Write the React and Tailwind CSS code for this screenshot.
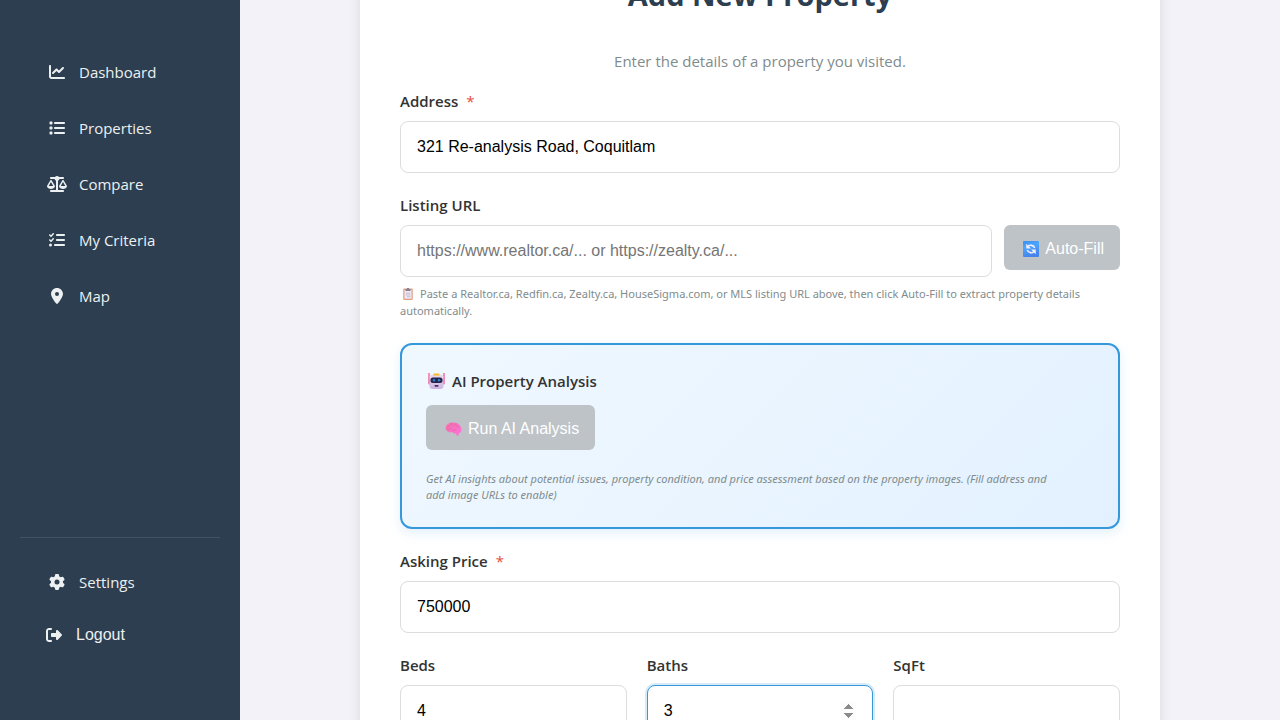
import React from "react";
import {
  FaChartLine,
  FaList,
  FaScaleBalanced,
  FaListCheck,
  FaLocationDot,
  FaGear,
  FaRightFromBracket,
} from "react-icons/fa6";

const NAV = [
  { label: "Dashboard", Icon: FaChartLine },
  { label: "Properties", Icon: FaList },
  { label: "Compare", Icon: FaScaleBalanced },
  { label: "My Criteria", Icon: FaListCheck },
  { label: "Map", Icon: FaLocationDot },
];

const INPUT =
  "block h-13 w-full min-w-0 rounded-lg border border-[#dddddd] bg-white px-4 text-base text-black outline-none placeholder:text-[#757575] font-['Liberation_Sans',Arial,sans-serif]";
const INPUT_ACTIVE =
  "block h-13 w-full min-w-0 rounded-lg border border-[#3498db] bg-white px-4 text-base text-black outline-none ring-2 ring-[#3498db]/20 font-['Liberation_Sans',Arial,sans-serif] [&::-webkit-inner-spin-button]:opacity-100";
const ACTION =
  "flex h-[45px] shrink-0 items-center gap-[6px] rounded-md bg-[#bdc3c7] pt-0.5 pr-4 pl-[19px] text-base text-white font-['Liberation_Sans',Arial,sans-serif]";

function NavLink({ label, Icon }) {
  return (
    <a href="#" className="flex h-12 items-center gap-3 px-[27px] text-[15px]">
      <Icon className="h-4 w-5" aria-hidden="true" />
      {label}
    </a>
  );
}

function ClipboardIcon() {
  return (
    <svg className="mr-[7px] ml-[3px] inline-block h-3 w-[10px] align-[-2px]" viewBox="0 0 20 24" aria-hidden="true">
      <rect x="0.5" y="1" width="19" height="23" rx="2" fill="#dfa280" />
      <rect x="3" y="4" width="14" height="17.5" fill="#eee8f6" />
      <path d="M5 2h2.500a2.500 2.500 0 0 1 5 0H15V6H5z" fill="#8b8195" />
      <path d="M5.5 10.500h9M5.5 14h9M8 17.500h6.500" stroke="#b9afc6" strokeWidth="1.5" />
    </svg>
  );
}

function RefreshIcon() {
  return (
    <svg className="size-4" viewBox="0 0 32 32" aria-hidden="true">
      <defs>
        <linearGradient id="refreshBg" x1="0" y1="0" x2="0.3" y2="1">
          <stop offset="0" stopColor="#3b8df0" />
          <stop offset="0.4" stopColor="#4ba6ff" />
          <stop offset="1" stopColor="#4684ec" />
        </linearGradient>
      </defs>
      <rect width="32" height="32" rx="2" fill="url(#refreshBg)" />
      <path
        d="M10 10.500C14 7 21 8 23.500 14M22 21.500C18 25 11 24 8.500 18"
        fill="none"
        stroke="#f2edff"
        strokeWidth="3.200"
      />
      <path d="M6.500 5.500v9.500h9.500zM25.500 26.500V17H16z" fill="#f2edff" />
    </svg>
  );
}

function RobotIcon() {
  return (
    <svg className="h-4 w-[17px]" viewBox="0 0 34 32" aria-hidden="true">
      <defs>
        <linearGradient id="robotFace" x1="0" y1="0" x2="0" y2="1">
          <stop offset="0" stopColor="#e6dcec" />
          <stop offset="1" stopColor="#cdb4e2" />
        </linearGradient>
      </defs>
      <path d="M2 0v10M32 0v10" stroke="#f0548c" strokeWidth="2.5" />
      <rect x="0.500" y="9" width="5" height="14" rx="2" fill="#f0659a" />
      <rect x="28.500" y="9" width="5" height="14" rx="2" fill="#f0659a" />
      <rect x="3" y="3" width="28" height="29" rx="6" fill="url(#robotFace)" />
      <path d="M11 5V3a2 2 0 0 1 2-2h8a2 2 0 0 1 2 2v2z" fill="#f9b92b" />
      <rect x="5" y="9" width="24" height="11" rx="5" fill="#2b2247" />
      <circle cx="12" cy="14.500" r="2.500" fill="#2186d8" />
      <circle cx="22" cy="14.500" r="2.500" fill="#2186d8" />
      <rect x="13" y="24" width="8" height="3.500" rx="1.500" fill="#43305c" />
    </svg>
  );
}

function BrainIcon() {
  return (
    <svg className="h-4 w-[17px]" viewBox="0 0 34 32" aria-hidden="true">
      <defs>
        <linearGradient id="brainFill" x1="0" y1="0" x2="1" y2="1">
          <stop offset="0" stopColor="#f276ab" />
          <stop offset="1" stopColor="#fe72da" />
        </linearGradient>
      </defs>
      <path
        d="M1 15C1 8 7 3 15 3c10-1 18 6 18 14 0 4-2 7-5 7l-1 5-3 1-2-5c-4 1-6-1-8-3-4 2-9 0-10-3-2 0-3-2-3-4z"
        fill="url(#brainFill)"
      />
      <path
        d="M5 13c2-3 5-2 6-5M13 5c-1 3 3 3 5 5M21 6c-1 3 4 4 6 7M5 18c4 0 3-4 8-3M15 20c2-3 5 0 7-3"
        fill="none"
        stroke="#e0529a"
        strokeWidth="1.200"
        strokeLinecap="round"
      />
    </svg>
  );
}

function Label({ htmlFor, required, children }) {
  return (
    <label htmlFor={htmlFor} className="mb-2 block text-[15px] leading-6 font-semibold text-[#333333]">
      {children}
      {required && <span className="ml-2 font-normal text-[#e74c3c]">*</span>}
    </label>
  );
}

export default function App() {
  return (
    <div className="flex h-screen overflow-hidden bg-[#f3f2f8] font-['Open_Sans','Noto_Sans',sans-serif]">
      <aside className="flex h-full w-60 shrink-0 flex-col justify-between bg-[#2c3e50] px-5 pt-12 pb-[62px] text-[#ecf0f1]">
        <nav className="flex flex-col gap-2" aria-label="Main">
          {NAV.map((item) => (
            <NavLink key={item.label} {...item} />
          ))}
        </nav>
        <div className="flex flex-col gap-1 border-t border-white/10 pt-5">
          <NavLink label="Settings" Icon={FaGear} />
          <button
            type="button"
            className="flex h-12 items-center gap-3 px-6 pt-0.5 text-base font-['Liberation_Sans',Arial,sans-serif]"
          >
            <FaRightFromBracket className="h-4 w-5" aria-hidden="true" />
            Logout
          </button>
        </div>
      </aside>

      <main className="min-w-0 flex-1 overflow-hidden px-10">
        <form className="mx-auto -mt-[65px] max-w-[800px] bg-white p-10 shadow-[0_4px_12px_rgba(0,0,0,0.1)]">
          <h1 className="text-center text-[29px] leading-10 font-bold text-[#2c3e50]">Add New Property</h1>
          <p className="mt-[34px] mb-4 text-center text-[15px] leading-6 text-[#7f8c8d]">
            Enter the details of a property you visited.
          </p>

          <div className="flex flex-col gap-5">
            <div>
              <Label htmlFor="address" required>Address</Label>
              <input id="address" type="text" defaultValue="321 Re-analysis Road, Coquitlam" className={INPUT} />
            </div>

            <div className="mb-1">
              <Label htmlFor="url">Listing URL</Label>
              <div className="flex items-start gap-3">
                <input
                  id="url"
                  type="url"
                  placeholder="https://www.realtor.ca/... or https://zealty.ca/..."
                  className={INPUT}
                />
                <button type="button" disabled className={ACTION}>
                  <RefreshIcon />
                  Auto-Fill
                </button>
              </div>
              <p className="mt-2 font-['Noto_Sans',sans-serif] text-[11px] leading-[17px] text-[#7f8c8d]">
                <ClipboardIcon />
                Paste a Realtor.ca, Redfin.ca, Zealty.ca, HouseSigma.com, or MLS listing URL above, then click Auto-Fill
                to extract property details automatically.
              </p>
            </div>

            <section className="rounded-xl border-2 border-[#3498db] bg-linear-135 from-[#f0f8ff] to-[#e3f1ff] p-6 shadow-[0_4px_12px_rgba(52,152,219,0.15)]">
              <h2 className="mb-3 flex items-center gap-[7px] pl-[2px] text-[15px] leading-6 font-semibold text-[#333333]">
                <RobotIcon />
                AI Property Analysis
              </h2>
              <button type="button" disabled className={ACTION}>
                <BrainIcon />
                Run AI Analysis
              </button>
              <p className="mt-[21px] font-['Noto_Sans',sans-serif] text-[11px] leading-4 text-[#7f8c8d] italic">
                Get AI insights about potential issues, property condition, and price assessment based on the property
                images. (Fill address and <span className="whitespace-nowrap">add image URLs</span> to enable)
              </p>
            </section>

            <div>
              <Label htmlFor="price" required>Asking Price</Label>
              <input id="price" type="number" defaultValue="750000" className={INPUT} />
            </div>

            <div className="grid grid-cols-3 gap-5">
              <div>
                <Label htmlFor="beds">Beds</Label>
                <input id="beds" type="number" defaultValue="4" className={INPUT} />
              </div>
              <div>
                <Label htmlFor="baths">Baths</Label>
                <input id="baths" type="number" defaultValue="3" className={INPUT_ACTIVE} />
              </div>
              <div>
                <Label htmlFor="sqft">SqFt</Label>
                <input id="sqft" type="number" className={INPUT} />
              </div>
            </div>
          </div>
        </form>
      </main>
    </div>
  );
}
